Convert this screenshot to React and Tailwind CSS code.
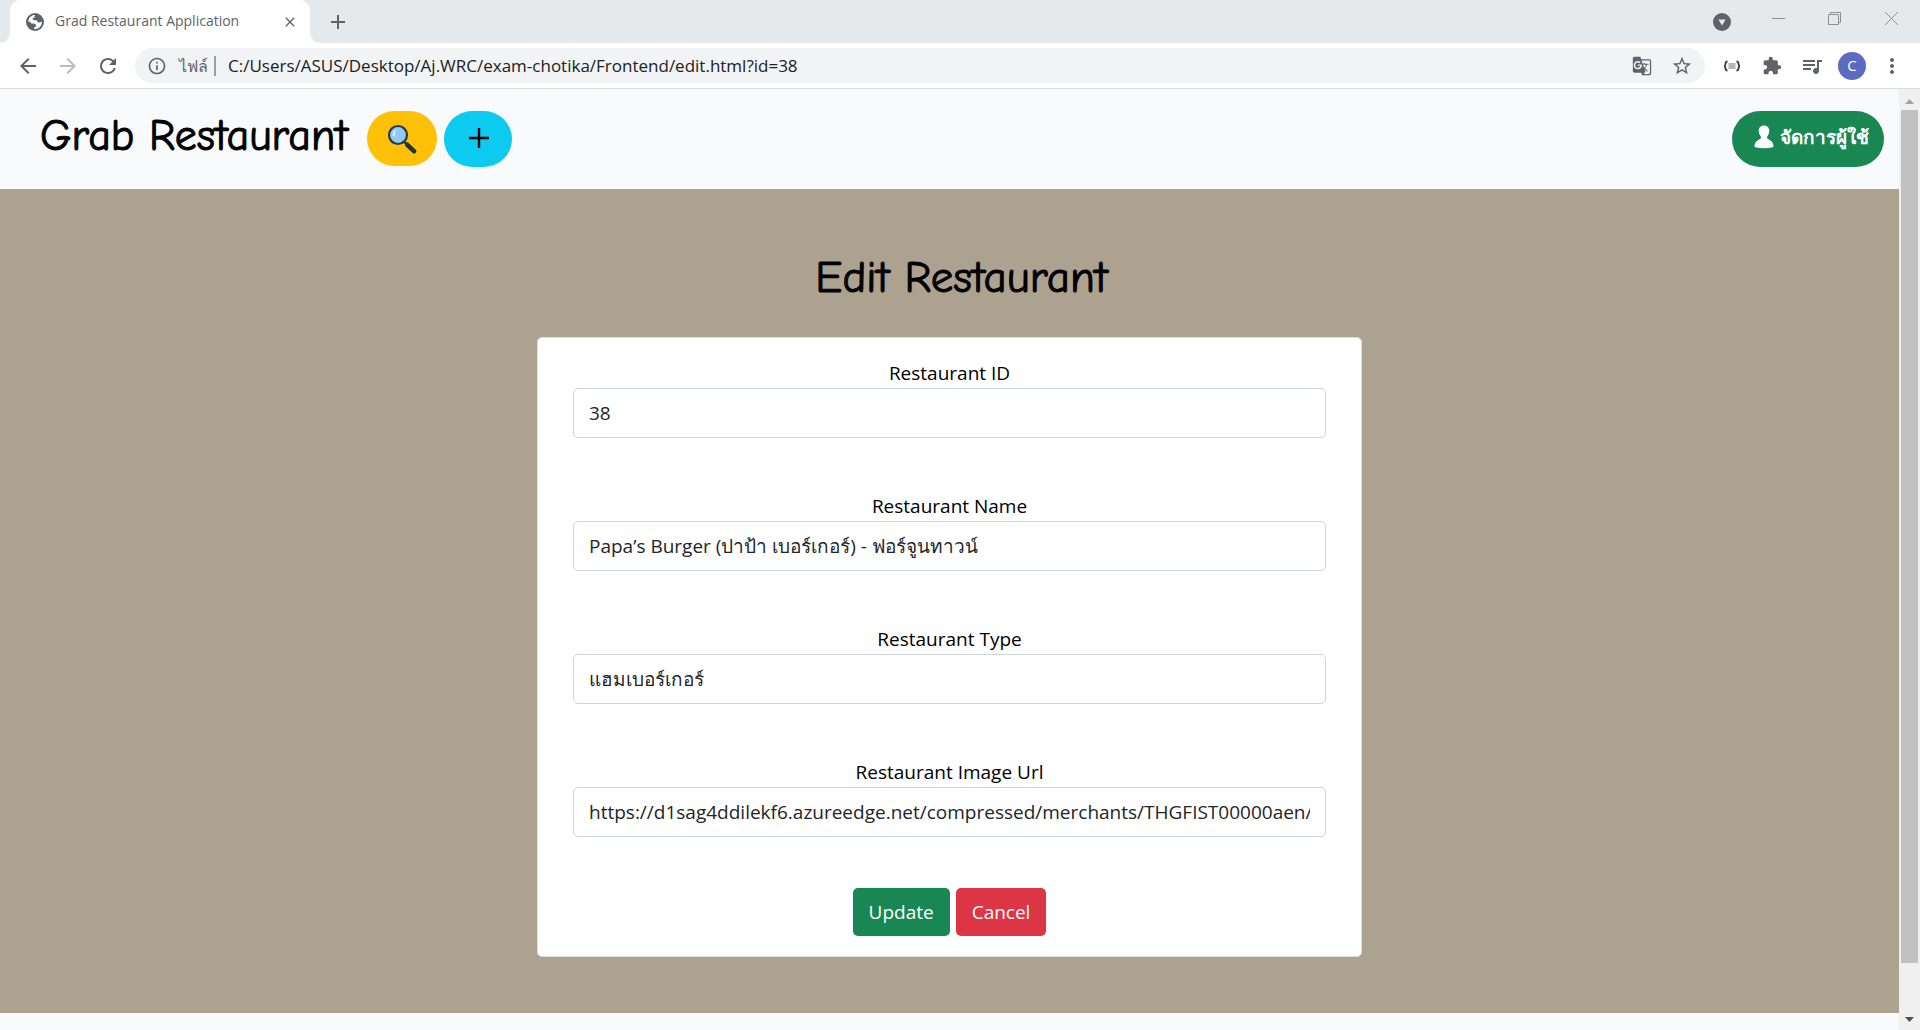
import React from "react";
import {
  MdArrowBack,
  MdArrowForward,
  MdRefresh,
  MdInfoOutline,
  MdStarBorder,
  MdExtension,
  MdQueueMusic,
  MdMoreVert,
  MdGTranslate,
  MdClose,
  MdAdd,
} from "react-icons/md";

const GlobeIcon = () => (
  <svg viewBox="0 0 18 18" className="size-[18px] shrink-0" aria-hidden="true">
    <circle cx="9" cy="9" r="9" fill="#5f6368" />
    <path
      d="M9.2 2 Q8 3.2 8.6 4.4 L7 5 L6.6 6.6 L8.6 7.2 L11.2 7.4 L11.6 9.2 L13.4 9.6 L16 8.6 Q16.2 12 13.4 14.4 Q11.4 16.2 8 16 L8.2 14.4 L10 13.4 L9.8 11.6 L7.8 10.6 L5 10.6 L4.6 9 L2 8.4 Q2.4 4.6 5.4 2.9 Q7.2 1.8 9.2 2 Z"
      fill="#fff"
    />
  </svg>
);

const BracesIcon = () => (
  <svg viewBox="0 0 18 12" className="h-3 w-[18px]" fill="none" stroke="#3c4043" aria-hidden="true">
    <path d="M4.5 1.5 Q2.5 1.5 2.5 3.5 Q2.5 6 1 6 Q2.5 6 2.5 8.5 Q2.5 10.5 4.5 10.5" strokeWidth="1.8" />
    <path d="M13.5 1.5 Q15.5 1.5 15.5 3.5 Q15.5 6 17 6 Q15.5 6 15.5 8.5 Q15.5 10.5 13.5 10.5" strokeWidth="1.8" />
    <path d="M5.5 4 H12.5 M5.5 6 H12.5 M5.5 8 H12.5" strokeWidth="1.2" stroke="#6b6f73" />
  </svg>
);

const MagnifierIcon = () => (
  <svg viewBox="0 0 30 30" className="size-[30px]" aria-hidden="true">
    <path d="M16.5 17 L20.5 21" stroke="#263238" strokeWidth="2.4" />
    <path d="M20.3 20.8 L27 27.2" stroke="#263238" strokeWidth="4.6" strokeLinecap="round" />
    <circle cx="11" cy="11" r="9" fill="#90caf9" stroke="#2b3a42" strokeWidth="2.2" />
    <path d="M5.6 11.5 Q5.4 7.4 9 5.4 Q7.6 8.4 7.4 12.4 Z" fill="#fff" opacity="0.85" />
  </svg>
);

const PersonIcon = () => (
  <svg viewBox="0 0 20 24" className="h-6 w-5" fill="#fff" aria-hidden="true">
    <path d="M10 0.5 C13.6 0.5 15.6 3.2 15.2 6.8 C15 9 14 10.4 13.2 11.6 C12.8 13.2 13.4 14 15.2 14.8 C18.2 16.2 19.4 18.6 19.5 22 Q10 24.4 0.5 22 C0.6 18.6 1.8 16.2 4.8 14.8 C6.6 14 7.2 13.2 6.8 11.6 C6 10.4 5 9 4.8 6.8 C4.4 3.2 6.4 0.5 10 0.5 Z" />
  </svg>
);

function TabStrip() {
  return (
    <div className="flex h-[43px] bg-[#e5e9ec]">
      <div className="w-[10px] bg-white">
        <div className="h-full rounded-br-[10px] bg-[#e5e9ec]" />
      </div>
      <div className="flex w-[300px] items-center rounded-t-[10px] bg-white pl-4 pr-2 text-[#5f6368]">
        <GlobeIcon />
        <span className="ml-[11px] flex-1 pb-[2px] text-sm">Grad Restaurant Application</span>
        <button aria-label="Close tab" className="flex size-6 items-center justify-center">
          <MdClose className="size-4" />
        </button>
      </div>
      <div className="bg-white">
        <div className="flex h-full items-center rounded-bl-[10px] bg-[#e5e9ec] pl-4">
          <button aria-label="New tab" className="flex size-6 items-center justify-center text-[#5f6368]">
            <MdAdd className="size-6" />
          </button>
        </div>
      </div>
      <div className="flex-1" />
      <button aria-label="Search tabs" className="flex w-[18px] items-center">
        <svg viewBox="0 0 18 18" className="size-[18px]" aria-hidden="true">
          <circle cx="9" cy="9" r="9" fill="#5f6368" />
          <path d="M5.4 6.4 H12.6 L9 12.4 Z" fill="#e5e9ec" />
        </svg>
      </button>
      <div className="ml-[19px] flex pb-[6px] text-[#8d9093]">
        <button aria-label="Minimize" className="flex w-14 items-center justify-center">
          <svg viewBox="0 0 13 13" className="size-[13px]" stroke="currentColor" aria-hidden="true">
            <path d="M0 6.5 H13" />
          </svg>
        </button>
        <button aria-label="Restore" className="flex w-14 items-center justify-center">
          <svg viewBox="0 0 13 13" className="size-[13px]" stroke="currentColor" fill="none" aria-hidden="true">
            <path d="M0.5 2.5 H10.5 V12.5 H0.5 Z M2.5 2.5 V0.5 H12.5 V10.5 H10.5" />
          </svg>
        </button>
        <button aria-label="Close" className="flex w-[58px] items-center justify-center">
          <svg viewBox="0 0 13 13" className="size-[13px]" stroke="currentColor" aria-hidden="true">
            <path d="M0 0 L13 13 M13 0 L0 13" />
          </svg>
        </button>
      </div>
    </div>
  );
}

const cell = "flex h-full w-10 shrink-0 items-center justify-center";

function Toolbar() {
  return (
    <div className="flex h-[46px] items-center border-b border-[#dadce0] bg-white px-2 text-[#5f6368]">
      <button aria-label="Back" className={cell}><MdArrowBack className="size-6" /></button>
      <button aria-label="Forward" className={cell}><MdArrowForward className="size-6 text-[#babcbe]" /></button>
      <button aria-label="Reload" className={cell}><MdRefresh className="size-6" /></button>
      <div className="mx-[7px] flex h-[35px] flex-1 items-center rounded-full bg-[#f1f3f4] pl-[2px] pr-[3px]">
        <button aria-label="Site information" className={cell}>
          <MdInfoOutline className="size-5" />
        </button>
        <span className="w-[39px] border-r-2 border-[#9a9da1] pl-[2px] text-base leading-5">ไฟล์</span>
        <input
          aria-label="Address"
          className="ml-3 min-w-0 flex-1 bg-transparent text-[17px] text-[#202124] outline-none"
          defaultValue="C:/Users/ASUS/Desktop/Aj.WRC/exam-chotika/Frontend/edit.html?id=38"
        />
        <button aria-label="Translate this page" className={cell}><MdGTranslate className="size-5" /></button>
        <button aria-label="Bookmark" className={cell}><MdStarBorder className="size-[22px]" /></button>
      </div>
      <button aria-label="Snippets" className={cell}><BracesIcon /></button>
      <button aria-label="Extensions" className={cell}><MdExtension className="size-5" /></button>
      <button aria-label="Media" className={cell}><MdQueueMusic className="size-6" /></button>
      <button aria-label="Profile" className={cell}>
        <span className="flex size-7 items-center justify-center rounded-full bg-[#5c6bc0] text-[15px] text-white">C</span>
      </button>
      <button aria-label="Menu" className={cell}><MdMoreVert className="size-6" /></button>
    </div>
  );
}

const comic = "font-['Comic_Sans_MS','Comic_Neue','Noto_Sans',sans-serif] text-black [-webkit-text-stroke:1px_black]";

function Navbar() {
  return (
    <header className="flex h-[100px] items-start justify-between bg-[#f8fafc] pl-10 pr-[15px] pt-[22px]">
      <div className="flex">
        <a href="#home" className={comic + " w-[327px] whitespace-nowrap text-[44px] leading-[50px]"}>Grab Restaurant</a>
        <button aria-label="Search" className="flex h-[55px] w-[70px] items-center justify-center rounded-[28px] bg-[#ffc107]">
          <MagnifierIcon />
        </button>
        <button aria-label="Add restaurant" className="ml-[7px] flex h-14 w-[68px] items-center justify-center rounded-[28px] bg-[#0dcaf0] pb-[2px] pl-[2px]">
          <svg viewBox="0 0 20 20" className="size-5" stroke="#000" strokeWidth="2.4" aria-hidden="true">
            <path d="M10 0 V20 M0 10 H20" />
          </svg>
        </button>
      </div>
      <button className="flex h-14 items-center rounded-full bg-[#198754] pb-1 pl-[22px] pr-[15px] text-[19px] font-semibold text-white">
        <PersonIcon />
        <span className="ml-[6px]">จัดการผู้ใช้</span>
      </button>
    </header>
  );
}

const fields = [
  ["id", "Restaurant ID", "38"],
  ["name", "Restaurant Name", "Papa’s Burger (ปาป้า เบอร์เกอร์) - ฟอร์จูนทาวน์"],
  ["type", "Restaurant Type", "แฮมเบอร์เกอร์"],
  ["img", "Restaurant Image Url", "https://d1sag4ddilekf6.azureedge.net/compressed/merchants/THGFIST00000aen/list/photo.jpg"],
];

function EditForm() {
  return (
    <form
      className="mx-auto max-w-[825px] rounded-[5px] border border-[#dfdfdf] bg-white px-[35px] py-5 text-[19px]"
      onSubmit={(e) => e.preventDefault()}
    >
      <div className="flex flex-col gap-[53px]">
        {fields.map(([id, label, value]) => (
          <div key={id}>
            <label htmlFor={id} className="block text-center leading-[30px] text-black">{label}</label>
            <input
              id={id}
              defaultValue={value}
              className="block h-[50px] w-full rounded-[5px] border border-[#ced4da] bg-white px-[15px] text-[#212529] outline-none"
            />
          </div>
        ))}
      </div>
      <div className="mt-[51px] flex justify-center gap-[6px]">
        <button type="submit" className="h-12 rounded-[5px] bg-[#198754] px-4 text-white">Update</button>
        <button type="button" className="h-12 rounded-[5px] bg-[#dc3545] px-4 text-white">Cancel</button>
      </div>
    </form>
  );
}

function Scrollbar() {
  return (
    <div className="flex w-[21px] shrink-0 flex-col items-center bg-[#f0f0f0]" aria-hidden="true">
      <div className="flex h-[21px] items-center pt-1">
        <svg viewBox="0 0 9 5" className="h-[5px] w-[9px]" fill="#a3a3a3"><path d="M0 5 L4.5 0 L9 5 Z" /></svg>
      </div>
      <div className="w-[17px] flex-1 bg-[#c1c1c1]" />
      <div className="flex h-[67px] items-end pb-2">
        <svg viewBox="0 0 9 5" className="h-[5px] w-[9px]" fill="#505050"><path d="M0 0 L4.5 5 L9 0 Z" /></svg>
      </div>
    </div>
  );
}

export default function App() {
  return (
    <div className="flex min-h-screen flex-col font-['Open_Sans','Noto_Sans',sans-serif]">
      <TabStrip />
      <Toolbar />
      <div className="flex flex-1">
        <div className="min-w-0 flex-1 bg-[#f8fafc]">
          <Navbar />
          <main className="bg-[#ada18f] pb-14 pt-14">
            <h1 className={comic + " mb-7 pl-6 text-center text-[45px] leading-[64px]"}>Edit Restaurant</h1>
            <EditForm />
          </main>
        </div>
        <Scrollbar />
      </div>
    </div>
  );
}
